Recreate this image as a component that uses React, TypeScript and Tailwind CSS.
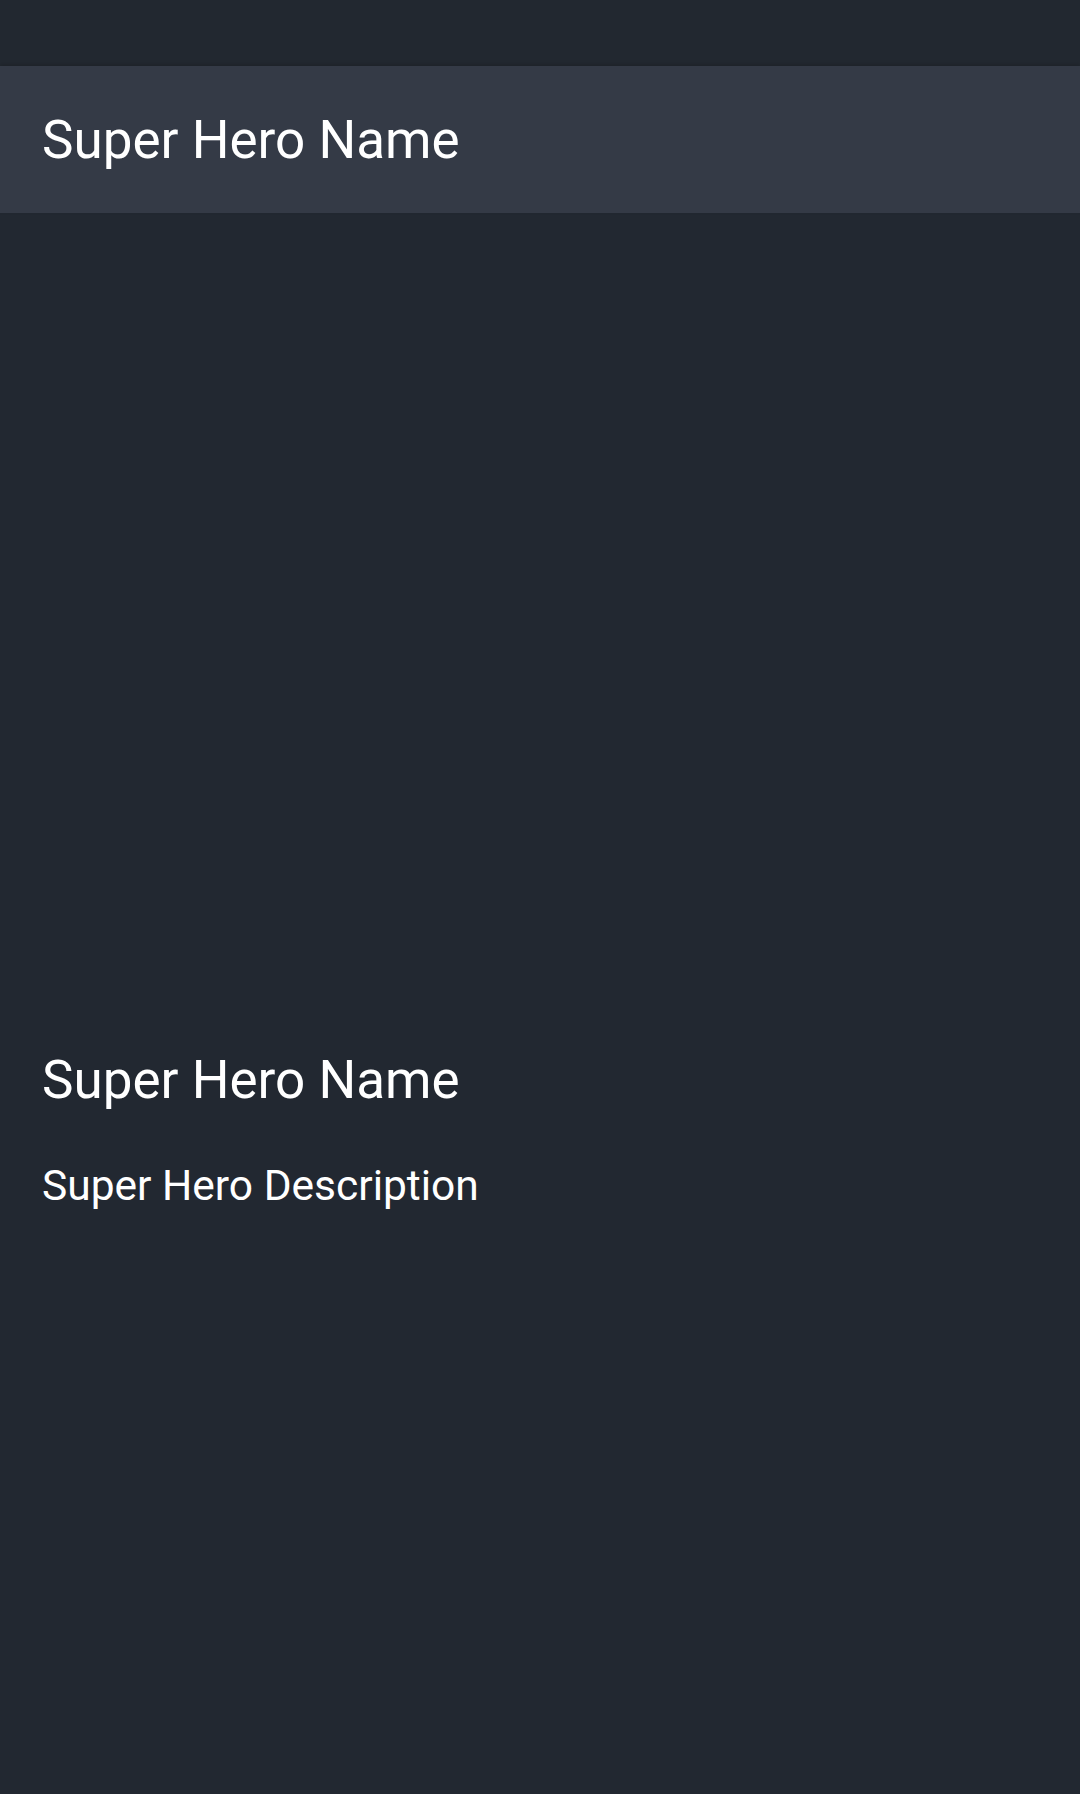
const hero = {
  name: "Super Hero Name",
  description: "Super Hero Description",
};

export default function App() {
  return (
    <div className="min-h-[1794px] bg-[#222831] text-white font-['Roboto',sans-serif]">
      {/* status bar */}
      <div className="h-[66px] bg-[#222830]" />

      {/* toolbar */}
      <header className="h-[147px] bg-[#343a46] flex items-center px-[42px] shadow-[0_-2px_4px_rgba(0,0,0,0.15)]">
        <h1 className="text-[53px] leading-[62px] font-normal">{hero.name}</h1>
      </header>

      {/* image placeholder (empty) */}
      <div className="h-[836px]" />

      <div className="px-[42px]">
        <h2 className="text-[53px] leading-[62px] font-normal">{hero.name}</h2>
        <p className="mt-[50px] text-[42.5px] leading-[49px]">{hero.description}</p>
      </div>
    </div>
  );
}
